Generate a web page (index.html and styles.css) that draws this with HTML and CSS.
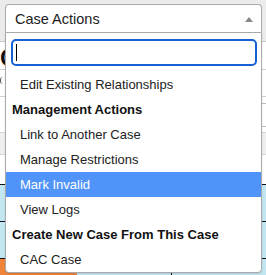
FILE: index.html
```html
<!DOCTYPE html>
<html lang="en">
<head>
    <meta charset="UTF-8">
    <title>Case Actions</title>
    <link rel="stylesheet" href="styles.css">
</head>
<body>
    <div class="page">
        <div class="topbar"></div>
        <h2 class="page-title">C</h2>
        <div class="detail-row"><span class="mark"></span></div>
        <div class="form-row"><span class="field"></span></div>
        <div class="toolbar"></div>
        <div class="spacer"></div>
        <div class="grid">
            <div class="grid-row"></div>
            <div class="grid-row"></div>
            <div class="grid-row last">
                <span class="btn-orange"></span>
                <span class="cell-line"></span>
            </div>
        </div>
    </div>

    <!-- select2 style dropdown, open -->
    <div class="select2">
        <div class="selection">
            <span class="rendered">Case Actions</span>
            <b class="arrow"></b>
        </div>
        <div class="dropdown">
            <div class="search">
                <div class="search-field"><span class="caret"></span></div>
            </div>
            <ul class="results">
                <li class="option">Edit Existing Relationships</li>
                <li class="group">Management Actions</li>
                <li class="option">Link to Another Case</li>
                <li class="option">Manage Restrictions</li>
                <li class="option highlighted">Mark Invalid</li>
                <li class="option">View Logs</li>
                <li class="group">Create New Case From This Case</li>
                <li class="option">CAC Case</li>
            </ul>
        </div>
    </div>
</body>
</html>
```

FILE: styles.css
```css
*,
*:before,
*:after{
    box-sizing: border-box;
}
body{
    margin: 0;
    font-family: "Liberation Sans", Arial, sans-serif;
    color: #222;
    background: #fff;
    overflow: hidden;
}
ul{
    list-style: none;
    padding: 0;
    margin: 0;
}

/* page behind the dropdown */
.page{
    width: 266px;
    height: 275px;
    overflow: hidden;
}
.topbar{
    height: 42px;
    background: #ebebeb;
    border-bottom: 1px solid #c9c9c9;
}
.page-title{
    margin: 0;
    padding-left: 0;
    height: 28px;
    font-size: 24px;
    line-height: 32px;
    font-weight: bold;
    color: #111;
    border-bottom: 1px solid #cfcfcf;
}
.detail-row{
    height: 27px;
    padding-top: 7px;
    border-bottom: 1px solid #cfcfcf;
}
.detail-row .mark{
    display: block;
    width: 3px;
    height: 7px;
    border-left: 1px solid #555;
    border-radius: 3px 0 0 3px;
}
.form-row{
    height: 36px;
    display: flex;
    justify-content: flex-end;
    align-items: center;
    border-bottom: 1px solid #d6d6d6;
}
.form-row .field{
    width: 60px;
    height: 24px;
    margin-right: -50px;
    border: 1px solid #bdbdbd;
    border-radius: 4px;
}
.toolbar{
    height: 22px;
    background: #efefef;
    border-bottom: 1px solid #d6d6d6;
}
.spacer{
    height: 29px;
}
.grid-row{
    height: 37px;
    background: #c2e6f2;
    border-top: 1px solid #111;
}
.grid-row.last{
    height: 60px;
    position: relative;
    overflow: hidden;
}
.btn-orange{
    position: absolute;
    left: -14px;
    top: -2px;
    width: 92px;
    height: 48px;
    border-radius: 24px;
    background: #f0843a;
}
.cell-line{
    position: absolute;
    left: 171px;
    top: 0;
    bottom: 0;
    border-left: 1px solid #111;
}

/* select2 */
.select2{
    position: absolute;
    top: 4px;
    left: 5px;
    width: 257px;
}
.selection{
    position: relative;
    height: 28px;
    background: #fff;
    border: 1px solid #aaa;
    border-bottom: 0;
    border-radius: 4px 4px 0 0;
}
.rendered{
    display: block;
    padding-left: 9px;
    font-size: 14.5px;
    line-height: 28px;
    color: #222;
}
.arrow{
    position: absolute;
    top: 12px;
    right: 8px;
    border-style: solid;
    border-width: 0 4px 5px 4px;
    border-color: transparent transparent #888 transparent;
}
.dropdown{
    background: #fff;
    border: 1px solid #aaa;
    border-radius: 0 0 4px 4px;
    box-shadow: 0 1px 2px rgba(0,0,0,.12);
    overflow: hidden;
}
.search{
    padding: 6px 4px 6px 5px;
}
.search-field{
    height: 27px;
    border: 2px solid #1560d4;
    border-radius: 5px;
    padding: 3px 0 0 3px;
}
.caret{
    display: block;
    width: 1px;
    height: 17px;
    background: #000;
}
.results{
    font-size: 13px;
}
.results li{
    height: 25px;
    line-height: 25px;
    white-space: nowrap;
}
.option{
    padding-left: 14px;
    color: #222;
}
.group{
    padding-left: 6px;
    font-weight: bold;
    color: #111;
}
.option.highlighted{
    background: #5094f9;
    color: #fff;
}
```
